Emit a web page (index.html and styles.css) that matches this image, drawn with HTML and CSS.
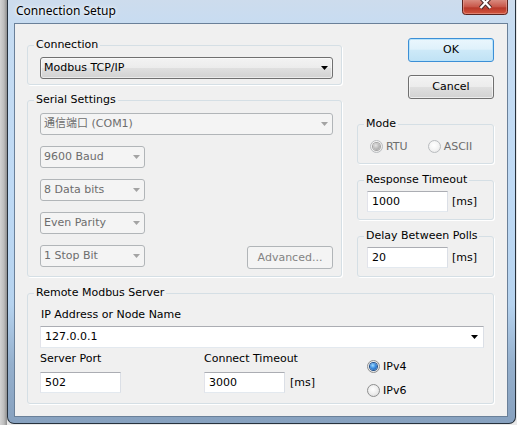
FILE: index.html
```html
<!DOCTYPE html>
<html>
<head>
<meta charset="utf-8">
<title>Connection Setup</title>
<link rel="stylesheet" href="styles.css">
</head>
<body>
<div class="screen">
  <div class="backdrop"></div>
  <div class="window">
    <div class="titlebar">
      <span class="title">Connection Setup</span>
      <div class="close">
        <svg width="46" height="15" viewBox="0 0 46 15">
          <defs>
            <linearGradient id="cg" x1="0" y1="0" x2="0" y2="1">
              <stop offset="0" stop-color="#d98a7f"/>
              <stop offset="0.45" stop-color="#c9594c"/>
              <stop offset="0.55" stop-color="#b8392b"/>
              <stop offset="1" stop-color="#d5573f"/>
            </linearGradient>
          </defs>
          <path d="M0.5 0 V11.5 Q0.5 14.5 3.5 14.5 H42.5 Q45.5 14.5 45.5 11.5 V0" fill="url(#cg)" stroke="#5a2420"/>
          <path d="M1.5 0 V11 Q1.5 13.5 4 13.5 H42 Q44.5 13.5 44.5 11 V0" fill="none" stroke="#e9a79c" stroke-opacity="0.55"/>
          <path d="M18.5 -2.5 L28.5 8 M28.5 -2.5 L18.5 8" stroke="#4a2a28" stroke-width="4.2"/>
          <path d="M18.5 -2.5 L28.5 8 M28.5 -2.5 L18.5 8" stroke="#ffffff" stroke-width="2.2"/>
        </svg>
      </div>
    </div>
    <div class="client">
      <div class="top">
        <div class="col-left">
          <fieldset class="group">
            <legend>Connection</legend>
            <div class="conn-body">
              <div class="combo combo-btn wide"><span>Modbus TCP/IP</span><svg class="arrow" width="7" height="4" viewBox="0 0 7 4"><path d="M0 0H7L3.5 4Z" fill="#000"/></svg></div>
            </div>
          </fieldset>
          <fieldset class="group">
            <legend>Serial Settings</legend>
            <div class="serial-body">
              <div class="combo disabled wide"><span>通信端口 (COM1)</span><svg class="arrow" width="7" height="4" viewBox="0 0 7 4"><path d="M0 0H7L3.5 4Z" fill="#a3a3a3"/></svg></div>
              <div class="combo disabled small"><span>9600 Baud</span><svg class="arrow" width="7" height="4" viewBox="0 0 7 4"><path d="M0 0H7L3.5 4Z" fill="#a3a3a3"/></svg></div>
              <div class="combo disabled small"><span>8 Data bits</span><svg class="arrow" width="7" height="4" viewBox="0 0 7 4"><path d="M0 0H7L3.5 4Z" fill="#a3a3a3"/></svg></div>
              <div class="combo disabled small"><span>Even Parity</span><svg class="arrow" width="7" height="4" viewBox="0 0 7 4"><path d="M0 0H7L3.5 4Z" fill="#a3a3a3"/></svg></div>
              <div class="last-row">
                <div class="combo disabled small"><span>1 Stop Bit</span><svg class="arrow" width="7" height="4" viewBox="0 0 7 4"><path d="M0 0H7L3.5 4Z" fill="#a3a3a3"/></svg></div>
                <div class="btn btn-disabled adv">Advanced...</div>
              </div>
            </div>
          </fieldset>
        </div>
        <div class="col-right">
          <div class="btn btn-default">OK</div>
          <div class="btn btn-normal cancel">Cancel</div>
          <fieldset class="group mode">
            <legend>Mode</legend>
            <div class="mode-body">
              <div class="radio-item dis"><span class="radio radio-dis checked"></span><span>RTU</span></div>
              <div class="radio-item dis ascii"><span class="radio radio-dis"></span><span>ASCII</span></div>
            </div>
          </fieldset>
          <fieldset class="group resp">
            <legend>Response Timeout</legend>
            <div class="tb-body">
              <div class="tb">1000</div><span>[ms]</span>
            </div>
          </fieldset>
          <fieldset class="group delay">
            <legend>Delay Between Polls</legend>
            <div class="tb-body last">
              <div class="tb">20</div><span>[ms]</span>
            </div>
          </fieldset>
        </div>
      </div>
      <fieldset class="group remote">
        <legend>Remote Modbus Server</legend>
        <div class="remote-body">
          <div class="lbl ip-lbl">IP Address or Node Name</div>
          <div class="combo combo-edit"><span>127.0.0.1</span><svg class="arrow" width="7" height="4" viewBox="0 0 7 4"><path d="M0 0H7L3.5 4Z" fill="#000"/></svg></div>
          <div class="server-grid">
            <div class="field">
              <div class="lbl">Server Port</div>
              <div class="tb">502</div>
            </div>
            <div class="field">
              <div class="lbl">Connect Timeout</div>
              <div class="tb-row"><div class="tb">3000</div><span>[ms]</span></div>
            </div>
            <div class="radios">
              <div class="radio-item"><span class="radio checked"></span><span>IPv4</span></div>
              <div class="radio-item"><span class="radio"></span><span>IPv6</span></div>
            </div>
          </div>
        </div>
      </fieldset>
    </div>
  </div>
</div>
</body>
</html>
```
FILE: styles.css
```css
* { box-sizing: border-box; }
html, body { margin: 0; padding: 0; }
body {
  width: 517px;
  height: 425px;
  overflow: hidden;
  background: #e9e9e9;
  font-family: "DejaVu Sans", "Noto Sans CJK SC", Verdana, sans-serif;
  font-size: 11px;
  line-height: 14px;
  color: #000;
}
.screen { display: flex; width: 517px; height: 425px; }
.backdrop {
  flex: none;
  width: 7px;
  height: 425px;
  background: linear-gradient(90deg, #d3d3d3, #bdbdbd 55%, #8f8f8f);
}
.window {
  flex: none;
  width: 509px;
  height: 424px;
  border: 1px solid #27323e;
  border-top: 0;
  border-radius: 0 0 7px 7px;
  background: linear-gradient(180deg, #cddced 0%, #c6dcf2 7%, #bfdaf5 45%, #b6d3ef 72%, #95b0cd 86%, #87a1bf 100%);
  padding: 0 7px 6px 6px;
  display: flex;
  flex-direction: column;
}
.titlebar {
  flex: none;
  height: 23px;
  display: flex;
  align-items: flex-start;
}
.title {
  font-family: "Noto Sans", "Liberation Sans", sans-serif;
  font-size: 12px;
  line-height: 21px;
  padding-left: 2px;
  color: #000;
  text-shadow: 0 0 6px rgba(255,255,255,0.95), 0 0 3px rgba(255,255,255,0.9);
}
.close { margin-left: auto; width: 46px; height: 15px; display: flex; }
.client {
  flex: none;
  height: 394px;
  border: 1px solid #6a8099;
  background: #f0f0f0;
  padding: 14px 13px 0 12px;
}
.top {
  display: grid;
  grid-template-columns: 315px 137px;
  column-gap: 15px;
  align-items: start;
}
.col-left { display: flex; flex-direction: column; gap: 8px; }
.col-right { display: flex; flex-direction: column; }

.group {
  margin: 0;
  padding: 0;
  min-width: 0;
  border: 1px solid #d5dfe5;
  border-radius: 3px;
  box-shadow: 1px 1px 0 #ffffff;
}
.group legend {
  margin-left: 6px;
  padding: 0 2px;
  line-height: 14px;
}

/* combos */
.combo {
  height: 22px;
  display: flex;
  align-items: center;
  justify-content: space-between;
  padding: 0 4px 0 3px;
  white-space: nowrap;
}
.combo .arrow { flex: none; }
.combo.wide { width: 100%; }
.combo.small { width: 105px; }
.combo-btn {
  border: 1px solid #707070;
  border-radius: 3px;
  background: linear-gradient(180deg, #f3f3f3 0%, #ececec 48%, #dfdfdf 52%, #d2d2d2 100%);
  box-shadow: inset 0 0 0 1px rgba(255,255,255,0.55);
}
.combo.disabled {
  border: 1px solid #b1b5b8;
  border-radius: 3px;
  background: #f4f4f4;
  color: #6d6d6d;
}
.combo-edit {
  width: 100%;
  margin-top: 4px;
  border: 1px solid;
  border-color: #abadb3 #dbdfe6 #e3e9ef #e2e3ea;
  background: #fff;
  padding: 0 5px 0 4px;
}

.conn-body { padding: 5px 8px 5px 12px; }
.serial-body {
  padding: 6px 8px 7px 12px;
  display: flex;
  flex-direction: column;
  align-items: flex-start;
  gap: 11px;
}
.last-row {
  width: 100%;
  display: flex;
  justify-content: space-between;
  align-items: flex-start;
}

/* buttons */
.btn {
  width: 86px;
  height: 24px;
  display: flex;
  align-items: center;
  justify-content: center;
  border-radius: 3px;
  align-self: flex-end;
}
.btn-default {
  border: 1px solid #3c8fd6;
  background: linear-gradient(180deg, #eaf6fd 0%, #dff1fb 46%, #cde9f8 52%, #c0e2f5 100%);
  box-shadow: inset 0 0 0 1px #b9e3fa;
}
.btn-normal {
  border: 1px solid #707070;
  background: linear-gradient(180deg, #f3f3f3 0%, #ececec 48%, #dfdfdf 52%, #d2d2d2 100%);
  box-shadow: inset 0 0 0 1px rgba(255,255,255,0.6);
}
.btn.cancel { margin-top: 13px; }
.btn-disabled {
  border: 1px solid #b1b5b8;
  background: #f4f4f4;
  color: #838383;
}
.btn.adv { height: 23px; margin-top: 1px; }

/* right groups */
.group.mode { margin-top: 18px; }
.group.resp, .group.delay { margin-top: 9px; }
.mode-body { padding: 9px 0 10px 12px; display: flex; }
.tb-body { padding: 4px 0 7px 9px; display: flex; align-items: center; gap: 4px; }
.tb-body.last { padding-bottom: 8px; }

/* radios */
.radio-item {
  display: flex;
  align-items: center;
  gap: 3px;
  height: 13px;
  line-height: 13px;
}
.radio-item.dis { color: #6d6d6d; }
.radio-item.ascii { margin-left: 20px; }
.radio {
  flex: none;
  width: 13px;
  height: 13px;
  border-radius: 50%;
  border: 1px solid #8e8f8f;
  background: radial-gradient(circle at 45% 40%, #ffffff 0%, #f0f0f0 45%, #d6d6d6 100%);
  display: flex;
  align-items: center;
  justify-content: center;
}
.radio.checked::after {
  content: "";
  width: 7px;
  height: 7px;
  border-radius: 50%;
  background: radial-gradient(circle at 40% 35%, #9fdcff 0%, #3d8de0 45%, #124f9b 100%);
  box-shadow: 0 0 0 1px #1f4f8a;
}
.radio-dis {
  border-color: #b9bcbf;
  background: radial-gradient(circle at 45% 40%, #ffffff 0%, #f4f4f4 50%, #e2e2e2 100%);
}
.radio-dis.checked::after {
  background: radial-gradient(circle at 40% 35%, #e4e4e4 0%, #b4b4b4 60%, #9a9a9a 100%);
  box-shadow: 0 0 0 1px #a4a4a4;
}

/* text boxes */
.tb {
  flex: none;
  width: 81px;
  height: 21px;
  background: #fff;
  border: 1px solid;
  border-color: #abadb3 #dbdfe6 #e3e9ef #e2e3ea;
  padding: 0 4px;
  display: flex;
  align-items: center;
}

/* remote */
.group.remote { margin-top: 9px; }
.remote-body { padding: 8px 9px 10px 12px; }
.ip-lbl { padding-left: 1px; }
.server-grid {
  margin-top: 4px;
  display: grid;
  grid-template-columns: 164px 163px 1fr;
  align-items: start;
}
.field > .tb, .field > .tb-row { margin-top: 6px; }
.tb-row { display: flex; align-items: center; gap: 5px; }
.radios {
  padding-top: 8px;
  margin-bottom: -4px;
  display: flex;
  flex-direction: column;
  gap: 11px;
}
```
